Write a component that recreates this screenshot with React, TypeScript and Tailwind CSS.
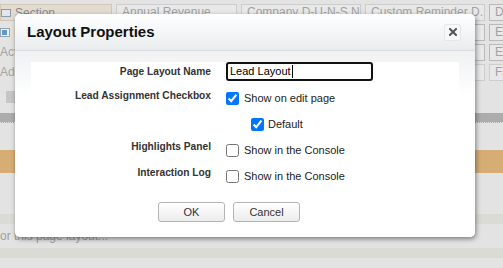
import React from 'react';

const font = { fontFamily: '"Liberation Sans", Arial, sans-serif' };

// greyed-out page layout editor behind the modal
function FieldBox({ label, w, dark }: { label: string; w: string; dark?: boolean }) {
    return (
        <div
            className={`${w} h-[17px] shrink-0 border ${dark ? 'border-[#b9b9b9]' : 'border-[#cdcdcd]'} bg-[#e8e8e8] px-[5px] text-[12px] leading-[15px] text-[#a2a2a2] overflow-hidden whitespace-nowrap`}
        >
            {label}
        </div>
    );
}

function Background() {
    return (
        <div className="flex flex-col w-full h-full bg-[#e3e3e3]">
            <div className="flex flex-col gap-[3px] pt-[4px]">
                <div className="flex gap-[4px]">
                    <div className="w-[112px] h-[17px] shrink-0 flex items-center gap-[4px] bg-[#e2dbd0] border border-[#cfc6b8] text-[12px] text-[#8a8a8a]">
                        <span className="w-[10px] h-[8px] border border-[#8e9aa6] bg-[#dfe6ee]" />
                        Section
                    </div>
                    <FieldBox label="Annual Revenue" w="w-[121px]" />
                    <FieldBox label="Company D-U-N-S N..." w="w-[120px]" />
                    <FieldBox label="Custom Reminder D..." w="w-[120px]" />
                    <FieldBox label="Do" w="w-[30px]" dark />
                </div>
                <div className="flex gap-[4px]">
                    <div className="w-[112px] h-[17px] shrink-0 flex items-center gap-[4px] text-[12px] text-[#9a9a9a]">
                        <span className="w-[10px] h-[9px] border border-[#9aa4ae] bg-[#f0f0f0] flex items-start">
                            <span className="w-[5px] h-[5px] bg-[#5b9bd5] ml-[1px] mt-[1px]" />
                        </span>
                        B
                    </div>
                    <FieldBox label="" w="w-[121px]" />
                    <FieldBox label="" w="w-[120px]" />
                    <FieldBox label="" w="w-[120px]" dark />
                    <FieldBox label="Email" w="w-[30px]" dark />
                </div>
                <div className="flex gap-[4px]">
                    <div className="w-[112px] h-[17px] shrink-0 text-[12px] leading-[17px] text-[#a5a5a5]">Acti</div>
                    <FieldBox label="" w="w-[121px]" />
                    <FieldBox label="" w="w-[120px]" />
                    <FieldBox label="" w="w-[120px]" dark />
                    <FieldBox label="Email" w="w-[30px]" dark />
                </div>
                <div className="flex gap-[4px]">
                    <div className="w-[112px] h-[17px] shrink-0 text-[12px] leading-[17px] text-[#a5a5a5]">Add</div>
                    <FieldBox label="" w="w-[121px]" />
                    <FieldBox label="" w="w-[120px]" />
                    <FieldBox label="" w="w-[120px]" />
                    <FieldBox label="Fax" w="w-[30px]" />
                </div>
            </div>
            <div className="mt-[10px] ml-[6px] w-[60px] h-[12px] bg-[#c6c6c6]" />
            <div className="mt-[10px] h-[10px] bg-[#acacac] border-b border-dotted border-[#e0e0e0]" />
            <div className="mt-[27px] h-[23px] bg-[#d6ad74]" />
            <div className="mt-[41px] h-[10px] bg-[#dbdbd6]" />
            <div className="h-[24px] text-[12px] leading-[24px] text-[#a0a0a0] whitespace-nowrap">or this page layout...</div>
            <div className="h-[10px] bg-[#dbdbd6]" />
        </div>
    );
}

function Check({ checked }: { checked?: boolean }) {
    return (
        <input
            type="checkbox"
            defaultChecked={checked}
            className="w-[13px] h-[13px] m-0 shrink-0 accent-[#0075ff]"
        />
    );
}

function Label({ children }: { children: React.ReactNode }) {
    return (
        <div className="w-[195px] shrink-0 pr-[15px] text-right text-[10.2px] font-bold leading-[13px] text-[#333]">
            {children}
        </div>
    );
}

export default function App() {
    return (
        <div className="relative w-[503px] h-[268px] overflow-hidden" style={font}>
            <Background />

            {/* modal */}
            <div className="absolute left-[15px] top-[14px] w-[460px] h-[223px] rounded-[5px] bg-white overflow-hidden shadow-[1px_2px_5px_rgba(0,0,0,0.45)] flex flex-col">
                <div className="h-[37px] shrink-0 flex items-center justify-between pl-[12px] pr-[14px] border-b border-[#dadddf] bg-[linear-gradient(to_bottom,#ffffff,#e9ecee)]">
                    <h2 className="text-[15px] font-bold text-[#111]">Layout Properties</h2>
                    <button className="w-[17px] h-[17px] flex items-center justify-center rounded-[2px] border border-[#e6e7e8] bg-[#f6f7f8]">
                        <svg width="8" height="8" viewBox="0 0 8 8">
                            <path d="M1 1 L7 7 M7 1 L1 7" stroke="#555" strokeWidth="2" strokeLinecap="square" />
                        </svg>
                    </button>
                </div>

                <div className="flex-1 bg-[linear-gradient(to_bottom,#eff1f2_0px,#ffffff_45px)] px-[16px] pt-[11px]">
                    <div className="bg-white flex flex-col text-[11px] text-[#222]">
                        <div className="flex items-center h-[19px]">
                            <Label>Page Layout Name</Label>
                            <div className="w-[147px] h-[19px] border-2 border-[#111] rounded-[3px] pl-[2px] flex items-center text-[11px] text-[#000]">
                                Lead Layout<span className="w-px h-[13px] bg-black ml-px" />
                            </div>
                        </div>

                        <div className="flex items-start h-[20px] mt-[8px]">
                            <Label>Lead Assignment Checkbox</Label>
                            <div className="mt-[3px] h-[13px] flex items-center gap-[5px]">
                                <Check checked />
                                <span>Show on edit page</span>
                            </div>
                        </div>

                        <div className="flex items-start h-[22px] pt-[9px]">
                            <Label>{''}</Label>
                            <div className="ml-[25px] h-[13px] flex items-center gap-[4px]">
                                <Check checked />
                                <span>Default</span>
                            </div>
                        </div>

                        <div className="flex items-start h-[17px] mt-[9px]">
                            <Label>Highlights Panel</Label>
                            <div className="mt-[4px] h-[13px] flex items-center gap-[5px]">
                                <Check />
                                <span>Show in the Console</span>
                            </div>
                        </div>

                        <div className="flex items-start h-[17px] mt-[9px]">
                            <Label>Interaction Log</Label>
                            <div className="mt-[4px] h-[13px] flex items-center gap-[5px]">
                                <Check />
                                <span>Show in the Console</span>
                            </div>
                        </div>

                        <div className="flex justify-center gap-[8px] mt-[19px] pr-[32px]">
                            <button className="w-[67px] h-[20px] rounded-[3px] border border-[#b4b4b4] bg-[linear-gradient(to_bottom,#ffffff,#ececec)] text-[11px] text-[#333]">
                                OK
                            </button>
                            <button className="w-[67px] h-[20px] rounded-[3px] border border-[#b4b4b4] bg-[linear-gradient(to_bottom,#ffffff,#ececec)] text-[11px] text-[#333]">
                                Cancel
                            </button>
                        </div>
                    </div>
                </div>
            </div>
        </div>
    );
}
